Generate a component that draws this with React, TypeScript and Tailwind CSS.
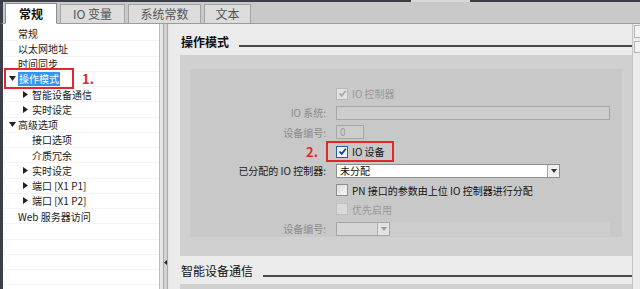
import { ReactNode } from 'react'

const font = { fontFamily: '"Noto Sans CJK SC", "Noto Sans", sans-serif' }

type TreeRow = { text: string; level: 0 | 1; arrow?: 'down' | 'right'; selected?: boolean }

const tree: TreeRow[] = [
  { text: '常规', level: 0 },
  { text: '以太网地址', level: 0 },
  { text: '时间同步', level: 0 },
  { text: '操作模式', level: 0, arrow: 'down', selected: true },
  { text: '智能设备通信', level: 1, arrow: 'right' },
  { text: '实时设定', level: 1, arrow: 'right' },
  { text: '高级选项', level: 0, arrow: 'down' },
  { text: '接口选项', level: 1 },
  { text: '介质冗余', level: 1 },
  { text: '实时设定', level: 1, arrow: 'right' },
  { text: '端口 [X1 P1]', level: 1, arrow: 'right' },
  { text: '端口 [X1 P2]', level: 1, arrow: 'right' },
  { text: 'Web 服务器访问', level: 0 }
]

const Arrow = ({ dir }: { dir: 'down' | 'right' }) =>
  dir === 'down' ? (
    <svg width="7" height="5" viewBox="0 0 7 5">
      <path d="M0 0 L7 0 L3.5 5 Z" fill="#222" />
    </svg>
  ) : (
    <svg width="5" height="7" viewBox="0 0 5 7">
      <path d="M0 0 L5 3.5 L0 7 Z" fill="#222" />
    </svg>
  )

const Check = ({ color }: { color: string }) => (
  <svg width="9" height="9" viewBox="0 0 9 9">
    <path d="M1.5 4.5 L3.7 6.8 L7.8 1.8" fill="none" stroke={color} strokeWidth="1.8" />
  </svg>
)

const Box = ({ kind }: { kind: 'off' | 'on' | 'dimOn' | 'dimOff' }) => {
  if (kind === 'on')
    return (
      <div className="w-[12px] h-[12px] border border-[#2a5ab0] bg-[#eef4ff] flex items-center justify-center">
        <Check color="#163c8c" />
      </div>
    )
  if (kind === 'dimOn')
    return (
      <div className="w-[12px] h-[12px] border border-[#b8b8b8] bg-[#e2e2e2] flex items-center justify-center">
        <Check color="#a8a8a8" />
      </div>
    )
  if (kind === 'dimOff')
    return <div className="w-[12px] h-[12px] border border-[#c0c0c0] bg-[#dadada]" />
  return <div className="w-[12px] h-[12px] border border-[#8e8e8e] bg-gradient-to-br from-[#dcdcdc] to-[#f6f6f6]" />
}

const Row = ({ label, dim, children }: { label?: ReactNode; dim?: boolean; children?: ReactNode }) => (
  <div className="h-[19.3px] flex items-center">
    <div className={`w-[138px] text-right pr-[2px] ${dim ? 'text-[#8c8c8c]' : 'text-[#1a1a1a]'}`}>{label}</div>
    <div className="ml-[8px] flex-1 flex items-center">{children}</div>
  </div>
)

const DropBtn = ({ dim }: { dim?: boolean }) => (
  <div
    className={`w-[12px] h-full border-l flex items-center justify-center ${
      dim ? 'border-[#b0b0b0] bg-[#e2e2e2]' : 'border-[#a0a0a0] bg-[#f0f0f0]'
    }`}
  >
    <svg width="6" height="4" viewBox="0 0 6 4">
      <path d="M0 0 L6 0 L3 4 Z" fill={dim ? '#9a9a9a' : '#333'} />
    </svg>
  </div>
)

const Heading = ({ text, bold, gap }: { text: string; bold?: boolean; gap: string }) => (
  <div className="flex items-end">
    <div className={`text-[12px] leading-[16px] text-[#111] ${bold ? 'font-bold' : ''}`}>{text}</div>
    <div className={`flex-1 h-[2px] bg-[#4a4a4a] ${gap}`} />
  </div>
)

export default function App() {
  return (
    <div className="w-[640px] h-[289px] overflow-hidden flex flex-col bg-[#d0d0d0]" style={font}>
      <div className="h-[2px] flex">
        <div className="w-[411px] bg-[#3a3f48]" />
        <div className="w-[59px] bg-[#d8d8d8]" />
        <div className="flex-1 bg-[#3a3f48]" />
      </div>

      <div className="h-[22px] flex items-end border-l-[3px] border-[#3a3f48] bg-[#c9c9c9] border-b border-b-[#9c9c9c] pl-[2px] gap-[3px]">
        <div className="w-[52px] h-[21px] -mb-px bg-white border border-[#8c8c8c] border-b-white flex items-center justify-center text-[12px] font-bold text-[#111]">
          常规
        </div>
        <div className="w-[65px] h-[19px] bg-[#dcdcdc] border border-[#a4a4a4] border-b-0 flex items-center justify-center text-[12px] text-[#555]">
          IO 变量
        </div>
        <div className="w-[73px] h-[19px] bg-[#dcdcdc] border border-[#a4a4a4] border-b-0 flex items-center justify-center text-[12px] text-[#555]">
          系统常数
        </div>
        <div className="w-[47px] h-[19px] bg-[#dcdcdc] border border-[#a4a4a4] border-b-0 flex items-center justify-center text-[12px] text-[#555]">
          文本
        </div>
      </div>

      <div className="flex flex-1 min-h-0">
        <div className="w-[3px] bg-[#3a3f48]" />
        <div className="w-[157px] bg-white border-r border-[#bcbcbc] pt-[2px] text-[10px] text-[#1a1a1a]">
          {tree.map((r, i) => (
            <div
              key={i}
              className={`h-[15.25px] flex items-center border-b border-[#f4f4f4] ${r.level === 0 ? 'pl-[3px]' : 'pl-[17px]'}`}
            >
              <div className="w-[12px] pl-[3px] flex items-center">{r.arrow && <Arrow dir={r.arrow} />}</div>
              {r.selected ? (
                <div className="flex items-center">
                  <div className="-ml-[14px] pl-[12px] pr-[12px] h-[21px] border-2 border-[#e0282c] flex items-center">
                    <span className="bg-[#3296f0] text-white px-px leading-[14px]">{r.text}</span>
                  </div>
                  <span className="ml-[8px] text-[13px] leading-[13px] font-bold text-[#e0282c]">1.</span>
                </div>
              ) : (
                <span>{r.text}</span>
              )}
            </div>
          ))}
          {[0, 1, 2, 3].map((i) => (
            <div key={i} className="h-[15.25px] border-b border-[#f4f4f4]" />
          ))}
        </div>

        <div className="w-[10px] flex bg-[#e6e6e6]">
          <div className="w-[3px]" />
          <div className="w-[5px] bg-[#d2d2d2] border-x border-[#a9a9a9] flex flex-col justify-end items-center pb-[24px]">
            <svg width="3" height="5" viewBox="0 0 3 5">
              <path d="M3 0 L0 2.5 L3 5 Z" fill="#222" />
            </svg>
          </div>
        </div>

        <div className="flex-1 bg-[#ebebeb] flex flex-col text-[10px]">
          <div className="h-[31px] flex flex-col justify-end pl-[11px] pb-[5px]">
            <Heading text="操作模式" bold gap="ml-[10px] mb-[3px]" />
          </div>

          <div className="ml-[10px] h-[201px] bg-[#d0d0d0] pt-[14px] px-[10px]">
            <div className="h-[168px] bg-[#c8c8c8] pt-[15px]">
              <Row>
                <Box kind="dimOn" />
                <span className="ml-[4px] text-[#9a9a9a]">IO 控制器</span>
              </Row>
              <Row label="IO 系统:" dim>
                <div className="w-[274px] h-[14px] border border-[#a6a6a6] bg-[#cdcdcd]" />
              </Row>
              <Row label="设备编号:" dim>
                <div className="w-[28px] h-[14px] border border-[#a6a6a6] bg-[#cdcdcd] pl-[3px] leading-[12px] text-[#9a9a9a]">
                  0
                </div>
              </Row>
              <Row label={<span className="text-[13px] font-bold text-[#e0282c] mr-[8px]">2.</span>}>
                <div className="-ml-[10px] w-[68px] h-[21px] border-2 border-[#e0282c] pl-[8px] flex items-center">
                  <Box kind="on" />
                  <span className="ml-[4px] text-[#111]">IO 设备</span>
                </div>
              </Row>
              <Row label="已分配的 IO 控制器:">
                <div className="w-[224px] h-[14px] border border-[#8e8e8e] bg-white flex items-center">
                  <span className="flex-1 pl-[3px] text-[#111]">未分配</span>
                  <DropBtn />
                </div>
              </Row>
              <Row>
                <Box kind="off" />
                <span className="ml-[4px] text-[#111]">PN 接口的参数由上位 IO 控制器进行分配</span>
              </Row>
              <Row>
                <Box kind="dimOff" />
                <span className="ml-[4px] text-[#9a9a9a]">优先启用</span>
              </Row>
              <Row label="设备编号:" dim>
                <div className="w-[54px] h-[14px] border border-[#a6a6a6] bg-[#d6d6d6] flex justify-end">
                  <DropBtn dim />
                </div>
                <div className="w-[220px] h-[14px] bg-[#cdcdcd]" />
              </Row>
            </div>
          </div>

          <div className="h-[28px] flex flex-col justify-end pl-[11px] pb-[5px]">
            <Heading text="智能设备通信" gap="ml-[10px] mb-[2px]" />
          </div>
          <div className="ml-[10px] flex-1 bg-[#d0d0d0]" />
        </div>

        <div className="w-[8px] bg-[#ececec] border-l border-[#c4c4c4] flex flex-col items-end pt-[1px] gap-[3px]">
          <div className="w-[6px] h-[13px] border border-[#b4b4b4] border-r-0 bg-[#f4f4f4]" />
          <div className="w-[6px] h-[12px] border border-[#b4b4b4] border-r-0 bg-[#f4f4f4]" />
        </div>
      </div>
    </div>
  )
}
